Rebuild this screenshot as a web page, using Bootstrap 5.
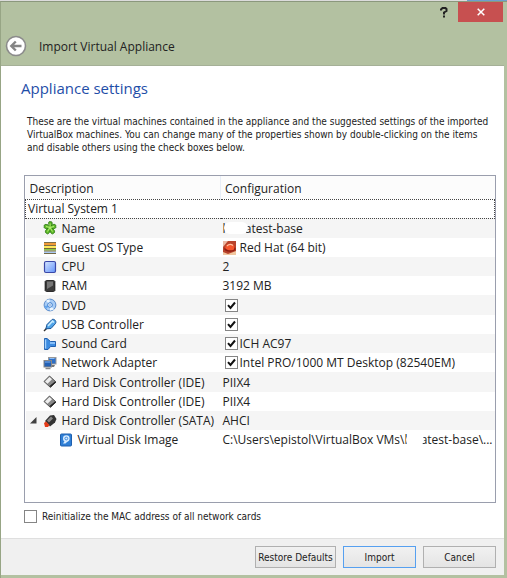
<!DOCTYPE html>
<html lang="en">
<head>
<meta charset="utf-8">
<meta name="viewport" content="width=device-width, initial-scale=1">
<title>Import Virtual Appliance</title>
<link href="https://cdn.jsdelivr.net/npm/bootstrap@5.3.0/dist/css/bootstrap.min.css" rel="stylesheet">
<style>
body { font-family: "DejaVu Sans Condensed", "DejaVu Sans", sans-serif; font-stretch: condensed; font-size: 10px; line-height: 13px; color: #222; background: #b3c1a1; }
.desktop-strip { height: 1px; background: linear-gradient(to left, #6d9fce 40px, #dcdcdc 40px); }
.wizard { border-top: 1px solid #8b987d; border-left: 1px solid #97a585; padding: 0 3px 3px 0; }
.ui-text { font-family: "Open Sans", "Noto Sans", sans-serif; font-stretch: normal; font-size: 12px; line-height: 19px; }
.title-buttons { height: 20px; padding-right: 1px; }
.title-buttons button { border: 0; border-radius: 0; padding: 0; background: none; line-height: 0; }
.help-btn { width: 28px; }
.title-buttons .close-btn { width: 45px; background: #c75050; }
.title-row { height: 43px; padding: 5px 4px 0; gap: 12px; }
.back-btn { line-height: 0; }
.content-pane { background: #fff; border-top: 1px solid #a5b097; padding: 10px 8px 15px 23px; }
.content-pane .page-title { font-size: 15px; line-height: 24px; color: #1f4ea8; margin: 0 0 15px -3px; }
.intro { margin: 0 0 21px 3px; }
.tree-box { border: 1px solid #9a9ead; }
.tree { width: 100%; table-layout: fixed; border-collapse: collapse; white-space: nowrap; }
.tree th { font-weight: 400; height: 23px; padding: 2px 4px 0; background: #fcfcfc; }
.tree th:first-child { width: 195px; border-right: 1px solid #e8eef7; }
.tree td { height: 19px; padding: 0 2px; }
.tree tbody tr:nth-child(4n+2) td { height: 20px; }
.tree tbody tr:nth-child(even) td { background: #f5f5f5; }
.tree tbody .system-row td { border: 1px dotted #444; padding: 0 2px; line-height: 18px; }
.item { gap: 5px; padding-left: 15px; height: 19px; }
.item.child-item { padding-left: 31px; }
.item svg { flex: none; }
.twisty { margin-left: -14px; }
.val { gap: 4px; height: 19px; }
.val-check { gap: 2px; padding-left: 2px; height: 19px; }
.box { appearance: none; flex: none; width: 13px; height: 13px; margin: 0; border: 1px solid #858585; background: #fff; }
.box:checked { background: #fff url("data:image/svg+xml,%3Csvg xmlns='http://www.w3.org/2000/svg' viewBox='0 0 11 11'%3E%3Cpath d='M2 5.2 4.5 8 9 2.5' fill='none' stroke='%23111' stroke-width='2'/%3E%3C/svg%3E"); }
.smudge { width: 24px; height: 12px; margin-left: -5px; margin-right: -3px; border-radius: 6px; background: #fff; position: relative; }
.reinit { gap: 5px; margin-top: 7px; }
.footer-bar { background: #f0f0f0; border-top: 1px solid #dfdfdf; padding: 7px 8px; gap: 7px; }
.footer-bar button { width: 73px; height: 22px; padding: 0; border: 1px solid #b0b0b0; border-radius: 0; background: linear-gradient(#f1f1f1, #e4e4e4); font-size: 10px; line-height: 13px; color: #222; white-space: nowrap; }
.footer-bar .wide-btn { width: 81px; }
.footer-bar .import-btn { border-color: #56a0f0; }
</style>
<script src="https://cdn.jsdelivr.net/npm/bootstrap@5.3.0/dist/js/bootstrap.bundle.min.js"></script>
</head>
<body>
<div class="d-flex flex-column min-vh-100">
<div class="desktop-strip"></div>
<main class="wizard d-flex flex-column flex-grow-1">
  <header>
    <div class="title-buttons d-flex justify-content-end">
      <button type="button" class="help-btn" aria-label="Help"><svg width="8" height="11" viewBox="0 0 8 11"><path d="M1 3.5V2.5L2.5 1H5.5L6.5 2V4L4 5.5V7.5M3 9.5H5" fill="none" stroke="#222" stroke-width="2"/></svg></button>
      <button type="button" class="btn close-btn" aria-label="Close"><svg width="8" height="8" viewBox="0 0 8 8"><path d="M.7.7 7.3 7.3M7.3.7.7 7.3" stroke="#fff" stroke-width="1.5"/></svg></button>
    </div>
    <div class="title-row d-flex align-items-center">
      <button type="button" class="back-btn btn p-0 border-0" aria-label="Back"><svg width="22" height="22" viewBox="0 0 22 22"><circle cx="11" cy="11" r="9.5" fill="#fff" stroke="#8b8b8b" stroke-width="1.6"/><path d="M16.5 11H7M10.8 6.5 6.3 11l4.5 4.5" fill="none" stroke="#858585" stroke-width="2.4"/></svg></button>
      <span class="ui-text">Import Virtual Appliance</span>
    </div>
  </header>
  <section class="content-pane d-flex flex-column flex-grow-1">
    <h1 class="page-title ui-text fw-normal">Appliance settings</h1>
    <p class="intro">These are the virtual machines contained in the appliance and the suggested settings of the imported VirtualBox machines. You can change many of the properties shown by double-clicking on the items and disable others using the check boxes below.</p>
    <div class="tree-box ui-text flex-grow-1">
      <table class="tree">
        <thead><tr><th scope="col">Description</th><th scope="col">Configuration</th></tr></thead>
        <tbody>
          <tr class="system-row"><td colspan="2">Virtual System 1</td></tr>
          <tr><td><div class="item d-flex align-items-center"><svg width="14" height="14" viewBox="0 0 14 14"><path d="M7 5.2C5.5 3.500 5-.2 7.200.8 9.700-.2 9.500 3.500 8.200 4.800 10 2.700 13.500 3 12.600 5.200 14 7 11 8 9.200 7.600 11.500 8.500 12.500 11.500 10.500 12.300 9 14 7.300 11.500 7 9.500 6.700 11.500 5 14 3.500 12.300 1.500 11.500 2.500 8.500 4.800 7.600 3 8 0 7 1.400 5.200.5 3 4 2.700 7 5.200Z" fill="#62bd2b" stroke="#2e7d12"/><path d="M7 2.500V6.500L3 5.500M7 6.500 11 5.500M7 6.500 4.500 10.500M7 6.500 9.500 10.500" stroke="#b6ee77" fill="none"/></svg>Name</div></td><td><div class="val d-flex align-items-center gap-0">k<span class="smudge"></span>atest-base</div></td></tr>
          <tr><td><div class="item d-flex align-items-center"><svg width="14" height="14" viewBox="0 0 14 14"><path d="M1 1.500h12v11H1z" fill="#fff"/><path d="M1 3h12" stroke="#f09b38" stroke-width="2"/><path d="M1 6h12" stroke="#ffe75a" stroke-width="2"/><path d="M1 8.500h12" stroke="#8cc84b" stroke-width="2"/><path d="M1 11.500h12" stroke="#a9c9f4" stroke-width="2"/><path d="M1 1.500h12M1 4.500h12M1 7.500h12M1 10h12M1 12.500h12" stroke="#5c4a1c" stroke-width=".8"/></svg>Guest OS Type</div></td><td><div class="val d-flex align-items-center"><svg width="13" height="14" viewBox="0 0 13 14"><path d="M0 0h13v14H0z" fill="#b8432c"/><path d="M0 0h5L0 6z" fill="#e9b9a4"/><path d="M0 11 5 13 13 10v4H0z" fill="#f1c7a0"/><ellipse cx="7" cy="8" rx="5.700" ry="2.700" fill="#8c1d12"/><path d="M2 7C3 2 10 1 11.500 6L11 8.500C8 10 4 9.500 2 7Z" fill="#f4552d"/><path d="M4 5C6 3 8 3 10 4.500" stroke="#ffc1a0" fill="none" stroke-width="1.300"/></svg>Red Hat (64 bit)</div></td></tr>
          <tr><td><div class="item d-flex align-items-center"><svg width="14" height="14" viewBox="0 0 14 14"><defs><linearGradient id="cpuFill" x2="1" y2="1"><stop stop-color="#d6e5ff"/><stop offset="1" stop-color="#6494fa"/></linearGradient></defs><rect x="1.500" y="1.500" width="11" height="11" rx="1.500" fill="url(#cpuFill)" stroke="#3a48a8" stroke-width="1.200"/></svg>CPU</div></td><td>2</td></tr>
          <tr><td><div class="item d-flex align-items-center"><svg width="14" height="14" viewBox="0 0 14 14"><path d="M1 3h12M1 5h12M1 7h12M1 9h12M1 11h12" stroke="#666"/><rect x="2.500" y="1.500" width="9" height="11" rx="1" fill="#3b3b3b" stroke="#2c2c2c"/><path d="M4 2.500h6v4L4 10z" fill="#777"/></svg>RAM</div></td><td>3192 MB</td></tr>
          <tr><td><div class="item d-flex align-items-center"><svg width="14" height="14" viewBox="0 0 14 14"><circle cx="7" cy="7" r="5.900" fill="#a9cdf5" stroke="#5c8dcc"/><path d="M7 7 3 2.500 6.500 1.200zM7 7l4 4.500-4 1.300z" fill="#edf7ff"/><path d="M7 7 1.500 8 3 11z" fill="#62a5ee"/><circle cx="7" cy="7" r="2.300" fill="#fff" stroke="#367bd0"/><circle cx="7" cy="7" r=".8" fill="#367bd0"/></svg>DVD</div></td><td><div class="val-check d-flex align-items-center"><input type="checkbox" class="box" aria-label="DVD" checked></div></td></tr>
          <tr><td><div class="item d-flex align-items-center"><svg width="14" height="14" viewBox="0 0 14 14"><path d="M1 13 4 10" stroke="#333" stroke-width="1.500"/><path d="M2.800 10.800 4 6.500 9 1.500C11 .5 14 3 12.500 5.500L8 10.500Z" fill="#4fa3e8" stroke="#1d5798"/><path d="M5 8 9.500 3.200 11 4.500" stroke="#c6ebff" fill="none" stroke-width="1.600"/></svg>USB Controller</div></td><td><div class="val-check d-flex align-items-center"><input type="checkbox" class="box" aria-label="USB Controller" checked></div></td></tr>
          <tr><td><div class="item d-flex align-items-center"><svg width="14" height="14" viewBox="0 0 14 14"><path d="M1.500 1.500H4L7.500 4.500H12.500V9.500H7.500L5 12.500H1.500Z" fill="#3c8be0" stroke="#215fae"/><path d="M2.500 2.500V11.500M7 6H12" stroke="#9fd0ff" stroke-width="1.400"/></svg>Sound Card</div></td><td><label class="val-check d-flex align-items-center"><input type="checkbox" class="box" checked>ICH AC97</label></td></tr>
          <tr><td><div class="item d-flex align-items-center"><svg width="14" height="14" viewBox="0 0 14 14"><path d="M8 9h4l-1 2H8z" fill="#777"/><rect x="5.500" y="1.500" width="7.500" height="6.500" fill="#2d6fc7" stroke="#999"/><path d="M6.500 2.500h5" stroke="#8dbdf5"/><rect x="1" y="4.500" width="7.500" height="6.500" fill="#2461b5" stroke="#888"/><path d="M2 6h5.500" stroke="#7eb0ee"/><path d="M2.500 12.500h5" stroke="#888" stroke-width="1.500"/></svg>Network Adapter</div></td><td><label class="val-check d-flex align-items-center"><input type="checkbox" class="box" checked>Intel PRO/1000 MT Desktop (82540EM)</label></td></tr>
          <tr><td><div class="item d-flex align-items-center"><svg width="14" height="14" viewBox="0 0 14 14"><path d="M1 6.500 6.500 1 13 7 7.500 12.500Z" fill="#888" stroke="#555"/><path d="M2 6.500 6.500 2 9 4.200 4.500 8.800Z" fill="#eee"/><path d="M7 11.500 12.500 7" stroke="#222" stroke-width="1.500"/></svg>Hard Disk Controller (IDE)</div></td><td>PIIX4</td></tr>
          <tr><td><div class="item d-flex align-items-center"><svg width="14" height="14" viewBox="0 0 14 14"><path d="M1 6.500 6.500 1 13 7 7.500 12.500Z" fill="#888" stroke="#555"/><path d="M2 6.500 6.500 2 9 4.200 4.500 8.800Z" fill="#eee"/><path d="M7 11.500 12.500 7" stroke="#222" stroke-width="1.500"/></svg>Hard Disk Controller (IDE)</div></td><td>PIIX4</td></tr>
          <tr><td><div class="item d-flex align-items-center"><svg class="twisty" width="9" height="9" viewBox="0 0 9 9"><path d="M7.500 1v6.500H1z" fill="#404040"/></svg><svg width="14" height="14" viewBox="0 0 14 14"><path d="M2 7 7 1.500 11 1 13.500 5 12 8.500 7 12.500Z" fill="#333"/><path d="M4 6.500 8 2.500 10 4.500 6 8.500Z" fill="#888"/><path d="M1 9 3 7.500 6.500 11 5 13H2Z" fill="#e33b19"/></svg>Hard Disk Controller (SATA)</div></td><td>AHCI</td></tr>
          <tr><td><div class="item child-item d-flex align-items-center"><svg width="14" height="14" viewBox="0 0 14 14"><rect x="1.500" y="1" width="11" height="12" rx="1" fill="#2f7fd6" stroke="#1e5fae"/><circle cx="7.300" cy="5.500" r="3.300" fill="#d8ecff"/><path d="M7.300 5.500 4 10.500H6.500L9 8" fill="#d8ecff"/><circle cx="7.300" cy="5.500" r="1.400" fill="none" stroke="#3e8ade"/></svg>Virtual Disk Image</div></td><td><div class="val d-flex align-items-center gap-0">C:\Users\epistol\VirtualBox VMs\k<span class="smudge"></span>atest-base\...</div></td></tr>
        </tbody>
      </table>
    </div>
    <label class="reinit d-flex align-items-center"><input type="checkbox" class="box">Reinitialize the MAC address of all network cards</label>
  </section>
  <footer class="footer-bar d-flex justify-content-end">
    <button type="button" class="wide-btn">Restore Defaults</button>
    <button type="button" class="import-btn">Import</button>
    <button type="button">Cancel</button>
  </footer>
</main>
</div>
</body>
</html>
